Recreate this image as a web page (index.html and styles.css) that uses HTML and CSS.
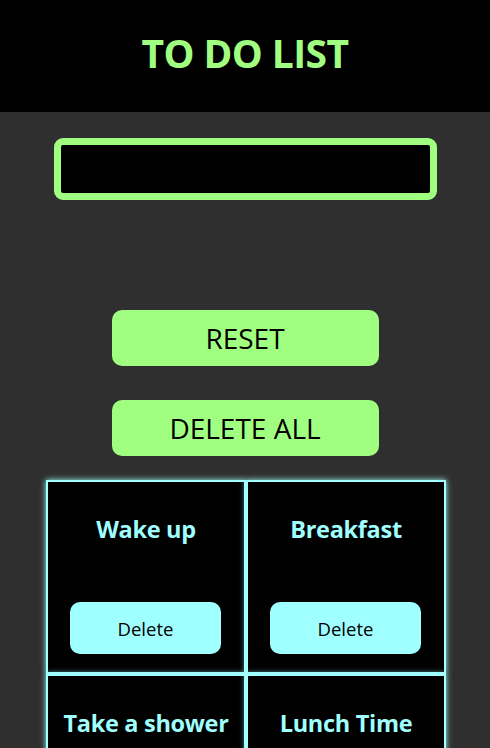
FILE: index.html
```html
<!DOCTYPE html>
<html lang="en">
<head>
<meta charset="utf-8">
<title>To Do List</title>
<link rel="stylesheet" href="styles.css">
</head>
<body>
<header class="top-bar">
  <h1 class="title">TO DO LIST</h1>
</header>
<main class="content">
  <input class="task-input" type="text">
  <div class="actions">
    <button class="action-btn">RESET</button>
    <button class="action-btn">DELETE ALL</button>
  </div>
  <div class="task-grid">
    <div class="task-card">
      <h2 class="task-name">Wake up</h2>
      <button class="delete-btn">Delete</button>
    </div>
    <div class="task-card">
      <h2 class="task-name">Breakfast</h2>
      <button class="delete-btn">Delete</button>
    </div>
    <div class="task-card">
      <h2 class="task-name">Take a shower</h2>
      <button class="delete-btn">Delete</button>
    </div>
    <div class="task-card">
      <h2 class="task-name">Lunch Time</h2>
      <button class="delete-btn">Delete</button>
    </div>
  </div>
</main>
</body>
</html>
```
FILE: styles.css
```css
* { box-sizing: border-box; }

body {
  margin: 0;
  background: #2f2f2f;
  font-family: "Open Sans", "Noto Sans", sans-serif;
}

.top-bar {
  background: #000;
  height: 112px;
  display: flex;
  align-items: center;
  justify-content: center;
}

.title {
  margin: 0;
  color: #a0ff80;
  font-size: 39px;
  font-weight: 700;
  letter-spacing: -0.6px;
  line-height: 1;
  padding-bottom: 8px;
}

.content {
  display: flex;
  flex-direction: column;
  align-items: center;
  padding-top: 26px;
}

.task-input {
  width: 383px;
  height: 62px;
  background: #000;
  border: 7px solid #a0ff80;
  border-radius: 9px;
  outline: none;
}

.actions {
  display: flex;
  flex-direction: column;
  gap: 34px;
  margin-top: 110px;
}

.action-btn {
  width: 267px;
  height: 56px;
  background: #a0ff80;
  border: none;
  border-radius: 10px;
  color: #000;
  font-family: inherit;
  font-size: 28px;
  font-weight: 500;
  padding: 0;
}

.task-grid {
  margin-top: 24px;
  width: 400px;
  display: grid;
  grid-template-columns: 200px 200px;
  margin-left: 2px;
}

.task-card {
  height: 194px;
  border: 2px solid #a0ffff;
  box-shadow: 0 0 6px #a0ffff;
  background: #000;
  display: flex;
  flex-direction: column;
  align-items: center;
  padding: 18px 0 18px;
}

.task-name {
  margin: 0;
  color: #a0ffff;
  font-size: 23.5px;
  font-weight: 700;
  letter-spacing: -0.3px;
  line-height: 32px;
  margin-top: 13px;
}

.delete-btn {
  margin-top: auto;
  margin-right: 1px;
  width: 151px;
  height: 52px;
  background: #a0ffff;
  border: none;
  border-radius: 10px;
  color: #000;
  font-family: inherit;
  font-size: 18.5px;
  font-weight: 500;
  padding: 0;
}
```
